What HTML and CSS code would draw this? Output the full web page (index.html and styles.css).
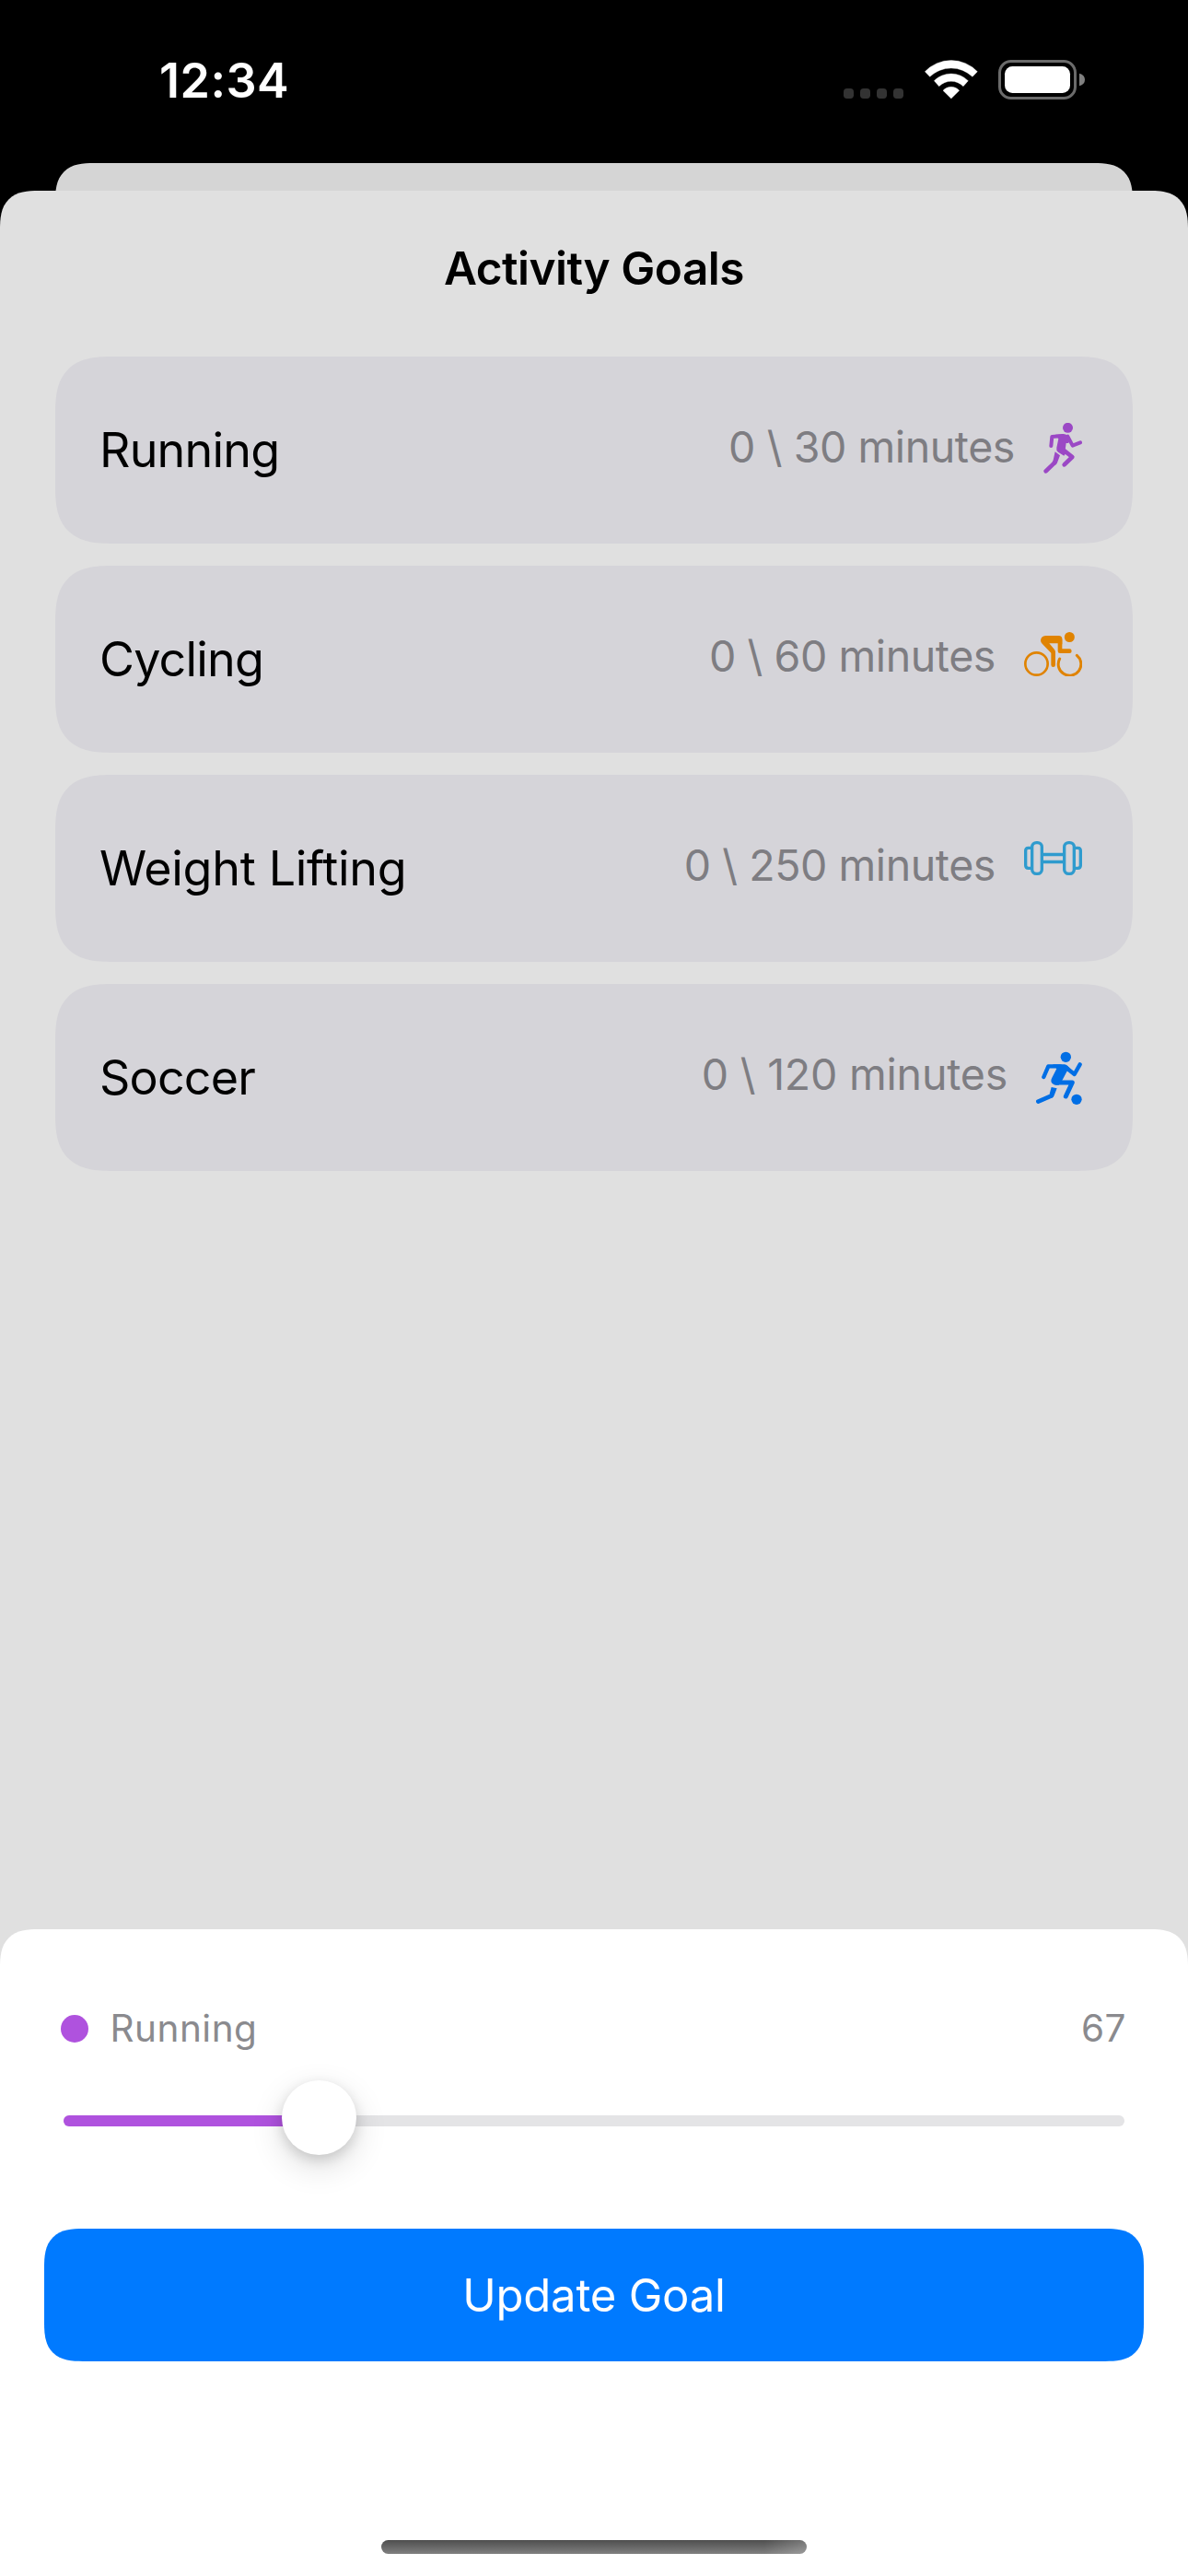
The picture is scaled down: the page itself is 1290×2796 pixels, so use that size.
FILE: index.html
```html
<!DOCTYPE html>
<html lang="en">
<head>
<meta charset="utf-8">
<title>Activity Goals</title>
<link rel="stylesheet" href="styles.css">
</head>
<body>
<header class="status">
  <span class="time">12:34</span>
  <div class="status-icons">
    <svg class="signal" viewBox="108 168 195 33" fill="#333"><rect x="108" y="168" width="33" height="33" rx="11"/><rect x="162" y="168" width="33" height="33" rx="11"/><rect x="216" y="168" width="33" height="33" rx="11"/><rect x="270" y="168" width="33" height="33" rx="11"/></svg>
    <svg class="wifi" viewBox="371 75 174 129" fill="#fff"><path d="M372 113A118 118 0 0 1 543 113L527 130A100 100 0 0 0 388 130ZM402 143A78 78 0 0 1 513 143L497 161A56 56 0 0 0 418 161ZM431 175A35 35 0 0 1 484 175L457.500 201Z" stroke="#fff" stroke-width="1" stroke-linejoin="round"/></svg>
    <svg class="battery" viewBox="612 75 282 129"><rect x="616.500" y="79.500" width="246" height="120" rx="37" fill="none" stroke="#6b6b6b" stroke-width="9"/><rect x="633" y="96" width="213" height="87" rx="25" fill="#fff"/><path d="M876 119Q894 124 894 139.500T876 160Z" fill="#808080"/></svg>
  </div>
</header>
<div class="back-sheet"></div>
<main class="sheet">
  <h1 class="title">Activity Goals</h1>
  <ul class="goals">
    <li class="goal goal-running">
      <span class="name">Running</span>
      <div class="progress"><span class="value">0 \ 30 minutes</span>
        <svg class="icon runner" viewBox="99 87 126 165" fill="none" stroke="#9b48c5" stroke-linecap="round" stroke-linejoin="round"><circle cx="178.500" cy="103" r="16.500" fill="#9b48c5" stroke="none"/><path d="M124 162L127 132L163 129M178 131L194 161L219 151" stroke-width="12"/><path d="M160 172L193 198L167 223" stroke-width="14"/><path d="M135 217L107 244" stroke-width="14"/><path d="M137 181L153 193L144 217Q142 222 137 225L128 215L131 208Z" fill="#9b48c5" stroke="none"/><path d="M138 125L168 124Q177 124 182 132L187 143L180 153L173 153L170 175L174 183L166 194L147 182Q140 177 142 168L148 139Z" fill="#9b48c5" stroke="none"/></svg>
      </div>
    </li>
    <li class="goal goal-cycling">
      <span class="name">Cycling</span>
      <div class="progress"><span class="value">0 \ 60 minutes</span>
        <svg class="icon cyclist" viewBox="36 48 189 144" fill="none" stroke="#e08300" stroke-linecap="round" stroke-linejoin="round"><circle cx="184" cy="64.500" r="16.500" fill="#e08300" stroke="none"/><circle cx="76.500" cy="151.500" r="36.500" stroke-width="8"/><path d="M152 135A37 37 0 1 0 208 124" stroke-width="9"/><path d="M153 72V110H184M131 115V155" stroke-width="14"/><path d="M106 60H149Q160 60 160 71V88H147V85H118L135 105Q138 109 138 116H124L95 86Q90 81 90 75Q91 61 106 60Z" fill="#e08300" stroke="none"/></svg>
      </div>
    </li>
    <li class="goal goal-lifting">
      <span class="name">Weight Lifting</span>
      <div class="progress"><span class="value">0 \ 250 minutes</span>
        <svg class="icon dumbbell" viewBox="36 39 189 111" fill="none" stroke="#2f9bce" stroke-width="10"><rect x="62" y="44" width="32" height="101" rx="14"/><rect x="167" y="44" width="32" height="101" rx="14"/><path d="M59 61H50Q41 61 41 70V118Q41 127 50 127H59M202 61H211Q220 61 220 70V118Q220 127 211 127H202M97 82.500H164M97 106.500H164"/></svg>
      </div>
    </li>
    <li class="goal goal-soccer">
      <span class="name">Soccer</span>
      <div class="progress"><span class="value">0 \ 120 minutes</span>
        <svg class="icon soccer" viewBox="46 30 150 174" fill="none" stroke="#006ee5" stroke-linecap="round" stroke-linejoin="round"><circle cx="143" cy="49" r="17" fill="#006ee5" stroke="none"/><circle cx="178" cy="187" r="17" fill="#006ee5" stroke="none"/><path d="M71 114L86 79H125M141 81L171 105L189 73" stroke-width="13"/><path d="M110 132H164L143 177" stroke-width="15"/><path d="M96 175L53 194" stroke-width="14"/><path d="M96 147L114 151L105 174Q103 180 97 182L90 169Z" fill="#006ee5" stroke="none"/><path d="M100 72.500H138Q144 73 149 78L155 84L146 97L131 125L120 140H112Q96 139 95 127Q95 121 98 116L113 87Z" fill="#006ee5" stroke="none"/></svg>
      </div>
    </li>
  </ul>
  <section class="editor">
    <div class="editor-head">
      <span class="dot"></span><span class="activity">Running</span><span class="amount">67</span>
    </div>
    <div class="slider"><div class="track"><div class="fill" style="width:24.130%"></div></div><div class="thumb" style="left:20.570%"></div></div>
    <button class="update">Update Goal</button>
    <div class="home"></div>
  </section>
</main>
</body>
</html>
```
FILE: styles.css
```css
* { box-sizing: border-box; margin: 0; padding: 0; }
body {
  width: 1290px; height: 2796px; overflow: hidden;
  display: flex; flex-direction: column;
  background: #000; color: #000;
  font-family: Inter, "Liberation Sans", sans-serif;
}
svg { display: block; flex: none; }
.status { height: 177px; padding: 0 112px 0 173px; display: flex; justify-content: space-between; }
.time { color: #fff; font-size: 52px; font-weight: 600; line-height: 176px; letter-spacing: .5px; }
.status-icons { display: flex; align-items: flex-end; height: 108px; }
.signal { width: 65px; height: 11px; margin: 0 22.700px 1px 0; }
.wifi { width: 58px; height: 43px; margin-right: 22.300px; }
.battery { width: 94px; height: 43px; }
.back-sheet { height: 60px; margin: 0 60px -30px; flex: none; background: #d5d5d5; border-radius: 30px 30px 0 0; }
.sheet { flex: 1; display: flex; flex-direction: column; position: relative; background: #e0e0e0; border-radius: 30px 30px 0 0; }
.title { height: 168px; line-height: 168px; text-align: center; font-size: 49.500px; font-weight: 600; letter-spacing: -.5px; }
.goals { list-style: none; padding: 12px 60px 0; display: flex; flex-direction: column; gap: 24px; }
.goal { height: 203px; padding: 0 55px 0 48px; border-radius: 45px; background: #d5d4d9; display: flex; justify-content: space-between; }
.name { font-size: 52px; line-height: 203px; letter-spacing: -.8px; }
.goal-lifting .name { letter-spacing: -.3px; }
.progress { display: flex; align-items: flex-start; gap: 31px; padding-top: 68px; color: #7e7d82; }
.value { font-size: 46.500px; line-height: 60px; white-space: pre; letter-spacing: -.42px; }
.goal-soccer .value { letter-spacing: -.2px; }
.icon { margin-top: 4px; }
.goal-soccer .icon { margin-top: 5px; }
.runner { width: 42px; height: 55px; }
.cyclist { width: 63px; height: 48px; }
.dumbbell { width: 63px; height: 37px; }
.soccer { width: 50px; height: 58px; }
.editor { height: 702px; margin-top: auto; padding: 78px 48px 24px; background: #fff; border-radius: 30px 30px 0 0; display: flex; flex-direction: column; }
.editor-head { height: 60px; padding: 0 19px 0 18px; display: flex; align-items: center; font-size: 40.500px; line-height: 60px; letter-spacing: .5px; color: #8a8a8e; }
.dot { width: 30px; height: 30px; border-radius: 50%; background: #af52de; margin-right: 23.500px; }
.amount { margin-left: auto; }
.slider { position: relative; height: 81px; margin: 26px 21px 80px; padding-top: 38px; }
.track { height: 12px; border-radius: 6px; background: #e4e4e6; overflow: hidden; }
.fill { height: 12px; background: #af52de; }
.thumb { position: absolute; top: 0; width: 81px; height: 81px; border-radius: 50%; background: #fff; box-shadow: 0 12px 36px rgba(0,0,0,.14), 0 5px 14px rgba(0,0,0,.14); }
.update { height: 144px; border: 0; border-radius: 30px; background: #007aff; color: #fff; font: 400 49px Inter, "Liberation Sans", sans-serif; letter-spacing: -.2px; }
.home { width: 462px; height: 15px; margin: auto auto 0; border-radius: 8px; background: linear-gradient(90deg, transparent 90%, rgba(255,255,255,.22)), linear-gradient(#4e4e4e, #808080); }

/* Continuous corners */
@supports (corner-shape: squircle) {
  .back-sheet, .sheet, .editor, .update, .goal { corner-shape: superellipse(1.45); }
  .back-sheet, .sheet, .editor { border-radius: 42px 42px 0 0; }
  .update { border-radius: 42px; }
  .goal { border-radius: 62px; }
}
```
